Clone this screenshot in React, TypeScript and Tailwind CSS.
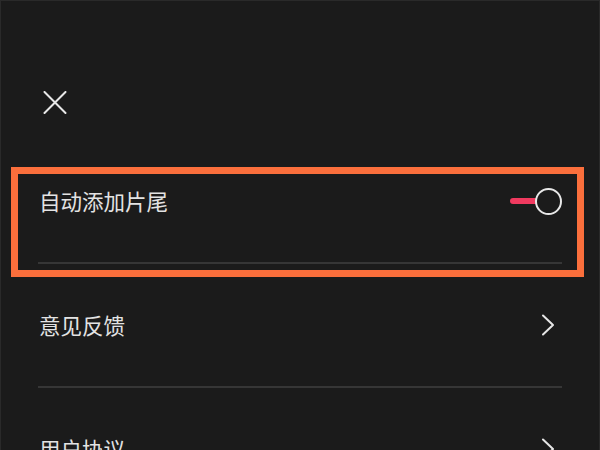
import type { ReactNode } from "react";

function Chevron() {
  return (
    <svg width="14" height="22" viewBox="0 0 14 22" fill="none" className="mr-[7px]">
      <polyline
        points="2,1.5 12,11 2,20.5"
        stroke="#e6e6e6"
        strokeWidth="2"
        strokeLinecap="round"
        strokeLinejoin="round"
      />
    </svg>
  );
}

function Toggle() {
  return (
    <div className="flex items-center">
      <div className="h-[6px] w-[28px] rounded-full bg-[#f03a5f] -mr-[3px]" />
      <div className="relative size-[27px] rounded-full border-2 border-[#e8e8e8] bg-[#1b1b1b]" />
    </div>
  );
}

function Row({ label, right }: { label: string; right: ReactNode }) {
  return (
    <>
      <div className="flex h-[122px] items-center justify-between">
        <span className="pl-px text-[21.5px] leading-none text-[#e3e3e3]">{label}</span>
        {right}
      </div>
      <div className="h-[2px] bg-[#363636]" />
    </>
  );
}

export default function App() {
  return (
    <div
      className="relative h-[450px] w-[600px] overflow-hidden border-x border-t border-[#2a2a2a] bg-[#1b1b1b]"
      style={{ fontFamily: '"Noto Sans CJK SC", "Noto Sans", sans-serif' }}
    >
      {/* Header: close button */}
      <div className="flex h-[139px] items-start pl-[42px] pt-[90px]">
        <svg width="24" height="23" viewBox="0 0 24 23" fill="none">
          <path
            d="M1.5 1 L22.5 22 M22.5 1 L1.5 22"
            stroke="#e8e8e8"
            strokeWidth="2"
            strokeLinecap="round"
          />
        </svg>
      </div>

      {/* Settings list */}
      <div className="mx-[37px] flex flex-col">
        <Row label="自动添加片尾" right={<Toggle />} />
        <Row label="意见反馈" right={<Chevron />} />
        <Row label="用户协议" right={<Chevron />} />
      </div>

      {/* Highlight annotation */}
      <div className="pointer-events-none absolute left-[10px] top-[166px] h-[110px] w-[573px] border-[7px] border-[#fb6f3c]" />
    </div>
  );
}
